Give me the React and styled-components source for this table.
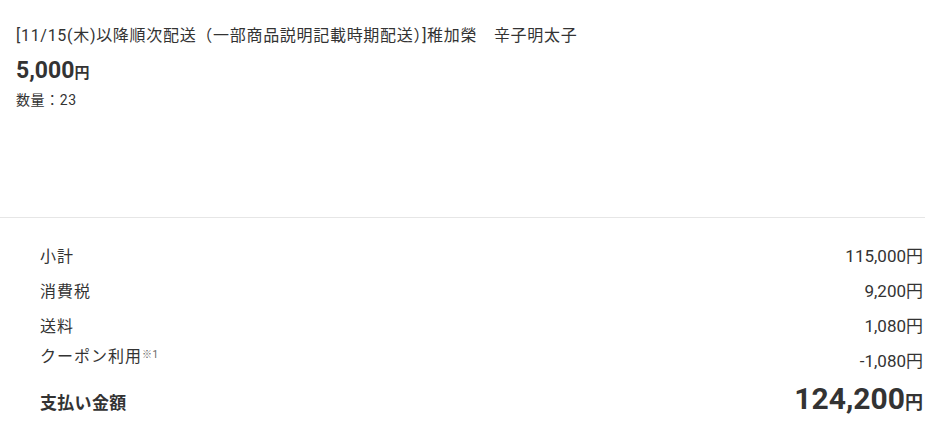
import styled, { createGlobalStyle } from "styled-components";

/* ────────────────────── Global ────────────────────── */
const GlobalStyle = createGlobalStyle`
  body {
    margin: 0;
    background: #ffffff;
    color: #333333;
    font-family: Roboto, "Noto Sans CJK JP", sans-serif;
  }
`;

/* ────────────────────── Data ────────────────────── */
const item = {
  title: "[11/15(木)以降順次配送（一部商品説明記載時期配送）]稚加榮　辛子明太子",
  price: "5,000",
  quantity: 23,
};

const summaryRows = [
  { label: "小計", value: "115,000" },
  { label: "消費税", value: "9,200" },
  { label: "送料", value: "1,080" },
  { label: "クーポン利用", note: "※1", value: "-1,080" },
];

/* ────────────────────── Styled Components ────────────────────── */
const Page = styled.div`
  width: 925px;
`;

const ItemBlock = styled.div`
  padding: 24px 0 0 16px;
  height: 218px;
  box-sizing: border-box;
  border-bottom: 1px solid #e6e6e6;
`;

const ItemTitle = styled.p`
  margin: 0;
  font-size: 16px;
  line-height: 24px;
  letter-spacing: 0.7px;
  color: #333;
`;

const Price = styled.p`
  margin: 8px 0 0;
  font-size: 23px;
  line-height: 30px;
  font-weight: 700;
  color: #333;
`;

const Yen = styled.span`
  font-size: ${(p) => p.$size || 15}px;
  font-weight: 700;
`;

const Quantity = styled.p`
  margin: 2px 0 0;
  font-size: 14px;
  line-height: 20px;
  letter-spacing: 0.6px;
  color: #333;
`;

const Summary = styled.div`
  padding: 19px 2px 0 40px;
  display: flex;
  flex-direction: column;
`;

const Row = styled.div`
  display: flex;
  justify-content: space-between;
  align-items: ${(p) => (p.$total ? "baseline" : "center")};
  height: ${(p) => (p.$total ? 42 : 35)}px;
  padding-top: ${(p) => (p.$total ? 4 : 0)}px;
`;

const Label = styled.span`
  font-size: ${(p) => (p.$bold ? 17 : 16)}px;
  font-weight: ${(p) => (p.$bold ? 700 : 400)};
  letter-spacing: ${(p) => (p.$bold ? 0.3 : 1)}px;
  color: #333;
  margin-top: ${(p) => (p.$raised ? -10 : 0)}px;
`;

const Note = styled.sup`
  font-size: 10px;
  color: #666;
  letter-spacing: 0.5px;
  vertical-align: 4px;
`;

const Value = styled.span`
  font-size: 17px;
  color: #333;
`;

const TotalValue = styled.span`
  font-size: 30px;
  font-weight: 700;
  color: #333;
`;

/* ────────────────────── Component ────────────────────── */
const App = () => {
  return (
    <>
      <GlobalStyle />
      <Page>
        <ItemBlock>
          <ItemTitle>{item.title}</ItemTitle>
          <Price>
            {item.price}
            <Yen>円</Yen>
          </Price>
          <Quantity>数量：{item.quantity}</Quantity>
        </ItemBlock>

        <Summary>
          {summaryRows.map((row) => (
            <Row key={row.label}>
              <Label $raised={!!row.note}>
                {row.label}
                {row.note && <Note>{row.note}</Note>}
              </Label>
              <Value>{row.value}円</Value>
            </Row>
          ))}
          <Row $total>
            <Label $bold>支払い金額</Label>
            <TotalValue>
              124,200<Yen $size={18}>円</Yen>
            </TotalValue>
          </Row>
        </Summary>
      </Page>
    </>
  );
};

export default App;
